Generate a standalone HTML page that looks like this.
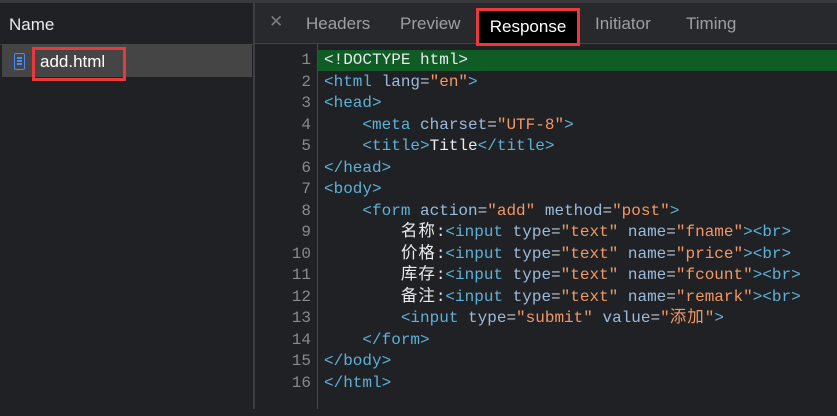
<!DOCTYPE html>
<html><head><style>
body{margin:0;width:837px;height:409px;background:#202124;overflow:hidden;position:relative;font-family:"Liberation Sans",sans-serif}
.top{position:absolute;left:0;top:0;width:837px;height:3px;background:#3a3a3d}
.left{position:absolute;left:0;top:3px;width:253px;height:406px;background:#202124}
.lh{position:absolute;left:0;top:0;width:253px;height:41px;border-bottom:1px solid #3c3c3f}
.lh span{position:absolute;left:9px;top:12px;color:#e8eaed;font-size:17px}
.row{position:absolute;left:2px;top:44px;width:250px;height:33px;background:#454545}
.ico{position:absolute;left:14px;top:53px;width:9px;height:15px;border:1.5px solid #4a8af4;border-radius:2px}
.ico i{position:absolute;left:2px;width:5px;height:1.5px;background:#4a8af4}
.fname{position:absolute;left:40px;top:52px;color:#fff;font-size:17px}
.red1{position:absolute;left:32px;top:47px;width:88px;height:28px;border:3px solid #e8393b}
.div{position:absolute;left:253px;top:3px;width:2px;height:406px;background:#3e3e42}
.tabs{position:absolute;left:255px;top:3px;width:582px;height:40px;background:#28292c;border-bottom:1px solid #454548}
.t{position:absolute;top:14px;color:#9aa0a6;font-size:17px}
.resp{position:absolute;left:476px;top:8px;width:98px;height:32px;background:#000;border:3px solid #e8393b;color:#fff;font-size:17px;text-align:center;line-height:32px}
.gut{position:absolute;left:255px;top:44px;width:62px;height:365px;border-right:1px solid #4a4a4d}
.hl{position:absolute;left:318px;top:50px;width:519px;height:21px;background:#0f5c25}
.code{position:absolute;left:0;top:50px;font-family:"Liberation Mono",monospace;font-size:16px;line-height:21.55px;white-space:pre}
.n{position:absolute;left:255px;width:56px;text-align:right;color:#8a8a8a;font-family:"Liberation Mono",monospace;font-size:16px}
.l{position:absolute;left:324px;color:#e8eaed;height:21px}
.g{color:#5db0d7}.a{color:#9bbbdc}.s{color:#f29766}.e{color:#bdc6cf}
.c{font-family:"Noto Sans CJK SC",sans-serif;font-size:16.5px;line-height:0;letter-spacing:1px}
</style></head><body>
<div class="top"></div>
<div class="left"><div class="lh"><span>Name</span></div></div>
<div class="row"></div>
<div class="ico"><i style="top:3px"></i><i style="top:6px"></i><i style="top:9px"></i></div>
<div class="fname">add.html</div>
<div class="red1"></div>
<div class="div"></div>
<div class="tabs"></div>
<div class="t" style="left:269px;top:12px;color:#7d7d80">✕</div>
<div class="t" style="left:306px">Headers</div>
<div class="t" style="left:400px">Preview</div>
<div class="resp">Response</div>
<div class="t" style="left:595px">Initiator</div>
<div class="t" style="left:686px">Timing</div>
<div class="gut"></div>
<div class="hl"></div>
<div class="code">
<div class="n" style="top:0">1</div><div class="l" style="top:0">&lt;!DOCTYPE html&gt;</div>
<div class="n" style="top:21.5px">2</div><div class="l" style="top:21.5px"><span class="g">&lt;html </span><span class="a">lang</span><span class="e">=</span><span class="s">"en"</span><span class="g">&gt;</span></div>
<div class="n" style="top:43px">3</div><div class="l" style="top:43px"><span class="g">&lt;head&gt;</span></div>
<div class="n" style="top:64.5px">4</div><div class="l" style="top:64.5px">    <span class="g">&lt;meta </span><span class="a">charset</span><span class="e">=</span><span class="s">"UTF-8"</span><span class="g">&gt;</span></div>
<div class="n" style="top:86px">5</div><div class="l" style="top:86px">    <span class="g">&lt;title&gt;</span>Title<span class="g">&lt;/title&gt;</span></div>
<div class="n" style="top:107.5px">6</div><div class="l" style="top:107.5px"><span class="g">&lt;/head&gt;</span></div>
<div class="n" style="top:129px">7</div><div class="l" style="top:129px"><span class="g">&lt;body&gt;</span></div>
<div class="n" style="top:150.5px">8</div><div class="l" style="top:150.5px">    <span class="g">&lt;form </span><span class="a">action</span><span class="e">=</span><span class="s">"add"</span> <span class="a">method</span><span class="e">=</span><span class="s">"post"</span><span class="g">&gt;</span></div>
<div class="n" style="top:172px">9</div><div class="l" style="top:172px">        <span class="c">名称</span>:<span class="g">&lt;input </span><span class="a">type</span><span class="e">=</span><span class="s">"text"</span> <span class="a">name</span><span class="e">=</span><span class="s">"fname"</span><span class="g">&gt;&lt;br&gt;</span></div>
<div class="n" style="top:193.5px">10</div><div class="l" style="top:193.5px">        <span class="c">价格</span>:<span class="g">&lt;input </span><span class="a">type</span><span class="e">=</span><span class="s">"text"</span> <span class="a">name</span><span class="e">=</span><span class="s">"price"</span><span class="g">&gt;&lt;br&gt;</span></div>
<div class="n" style="top:215px">11</div><div class="l" style="top:215px">        <span class="c">库存</span>:<span class="g">&lt;input </span><span class="a">type</span><span class="e">=</span><span class="s">"text"</span> <span class="a">name</span><span class="e">=</span><span class="s">"fcount"</span><span class="g">&gt;&lt;br&gt;</span></div>
<div class="n" style="top:236.5px">12</div><div class="l" style="top:236.5px">        <span class="c">备注</span>:<span class="g">&lt;input </span><span class="a">type</span><span class="e">=</span><span class="s">"text"</span> <span class="a">name</span><span class="e">=</span><span class="s">"remark"</span><span class="g">&gt;&lt;br&gt;</span></div>
<div class="n" style="top:258px">13</div><div class="l" style="top:258px">        <span class="g">&lt;input </span><span class="a">type</span><span class="e">=</span><span class="s">"submit"</span> <span class="a">value</span><span class="e">=</span><span class="s">"<span class="c">添加</span>"</span><span class="g">&gt;</span></div>
<div class="n" style="top:279.5px">14</div><div class="l" style="top:279.5px">    <span class="g">&lt;/form&gt;</span></div>
<div class="n" style="top:301px">15</div><div class="l" style="top:301px"><span class="g">&lt;/body&gt;</span></div>
<div class="n" style="top:322.5px">16</div><div class="l" style="top:322.5px"><span class="g">&lt;/html&gt;</span></div>
</div>
</body></html>
